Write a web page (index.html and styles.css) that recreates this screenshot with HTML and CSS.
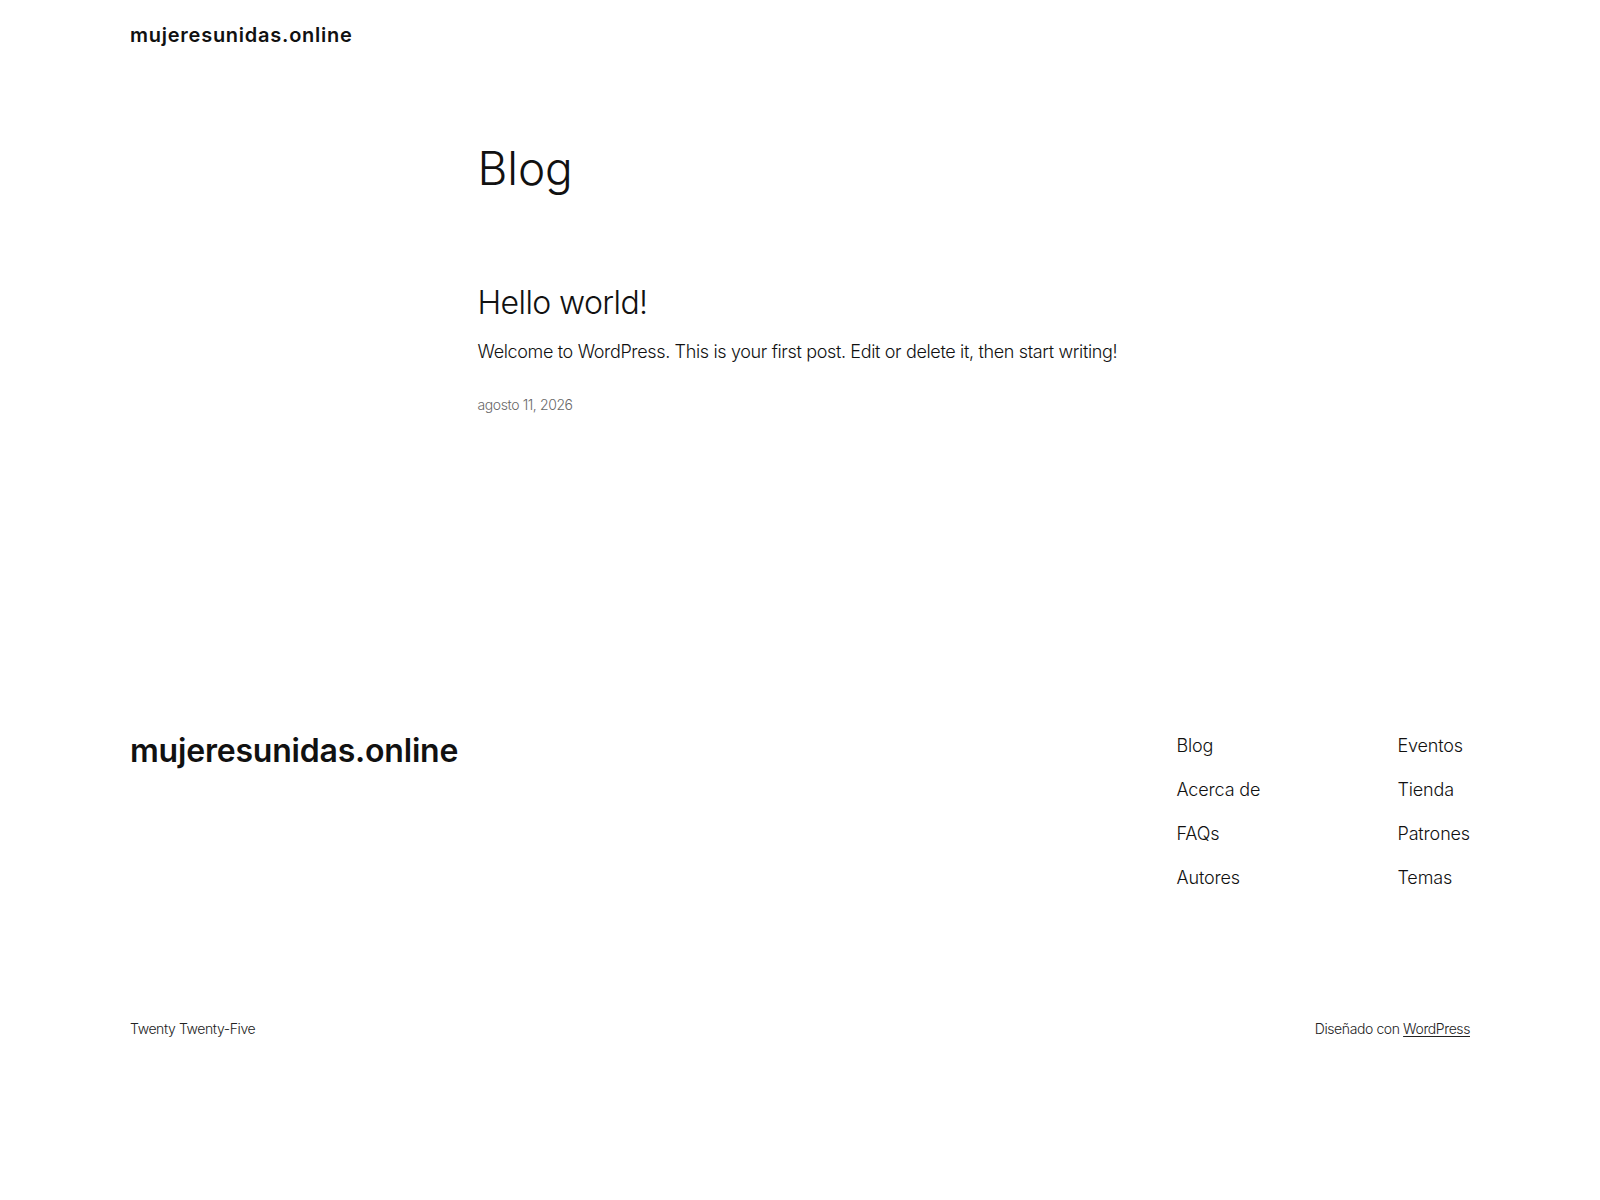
FILE: index.html
```html
<!DOCTYPE html>
<html lang="es">
<head>
<meta charset="utf-8">
<title>Blog – mujeresunidas.online</title>
<link rel="stylesheet" href="styles.css">
</head>
<body>
<header class="site-header">
  <div class="wide">
    <a class="site-title" href="#">mujeresunidas.online</a>
  </div>
</header>

<main class="site-main">
  <div class="content">
    <h1 class="page-title">Blog</h1>
    <article class="post">
      <h2 class="post-title"><a href="#">Hello world!</a></h2>
      <p class="post-excerpt">Welcome to WordPress. This is your first post. Edit or delete it, then start writing!</p>
      <div class="post-date">agosto 11, 2026</div>
    </article>
  </div>
</main>

<footer class="site-footer">
  <div class="wide">
    <div class="footer-top">
      <a class="footer-title" href="#">mujeresunidas.online</a>
      <nav class="footer-navs">
        <ul class="footer-nav first">
          <li><a href="#">Blog</a></li>
          <li><a href="#">Acerca de</a></li>
          <li><a href="#">FAQs</a></li>
          <li><a href="#">Autores</a></li>
        </ul>
        <ul class="footer-nav">
          <li><a href="#">Eventos</a></li>
          <li><a href="#">Tienda</a></li>
          <li><a href="#">Patrones</a></li>
          <li><a href="#">Temas</a></li>
        </ul>
      </nav>
    </div>
    <div class="footer-bottom">
      <span>Twenty Twenty-Five</span>
      <span>Diseñado con <a class="wp-link" href="#">WordPress</a></span>
    </div>
  </div>
</footer>
</body>
</html>
```

FILE: styles.css
```css
* { box-sizing: border-box; }

html, body {
  margin: 0;
  padding: 0;
  background: #ffffff;
}

body {
  font-family: Inter, "Noto Sans", "Liberation Sans", sans-serif;
  font-weight: 300;
  color: #111111;
  letter-spacing: -0.1px;
}

a {
  color: inherit;
  text-decoration: none;
}

.wide {
  width: 1340px;
  margin: 0 auto;
}

.content {
  width: 645px;
  margin: 0 auto;
}

/* Header */
.site-header {
  padding-top: 22px;
}

.site-title {
  display: block;
  font-size: 20px;
  line-height: 26px;
  font-weight: 600;
  letter-spacing: 0.75px;
}

/* Main */
.site-main {
  padding-top: 95px;
  min-height: 685px;
}

.page-title {
  margin: 0;
  font-size: 46px;
  line-height: 51px;
  font-weight: 300;
  letter-spacing: -0.1px;
}

.post {
  margin-top: 91px;
}

.post-title {
  margin: 0;
  font-size: 32px;
  line-height: 36px;
  font-weight: 300;
  letter-spacing: -0.6px;
}

.post-excerpt {
  margin: 18px 0 0;
  font-size: 18px;
  line-height: 25px;
  letter-spacing: -0.35px;
}

.post-date {
  margin-top: 31px;
  font-size: 14px;
  line-height: 20px;
  color: #686868;
  letter-spacing: -0.4px;
}

/* Footer */
.footer-top {
  display: flex;
  justify-content: space-between;
  align-items: flex-start;
}

.footer-title {
  font-size: 32px;
  line-height: 36px;
  font-weight: 600;
  letter-spacing: -0.2px;
  margin-top: 0;
}

.footer-navs {
  display: flex;
}

.footer-nav {
  list-style: none;
  margin: 0;
  padding: 0;
  display: flex;
  flex-direction: column;
  gap: 18px;
}

.footer-nav.first {
  width: 221px;
}

.footer-nav li {
  font-size: 18px;
  line-height: 26px;
  letter-spacing: -0.15px;
}

.footer-bottom {
  margin-top: 128px;
  display: flex;
  justify-content: space-between;
  font-size: 14px;
  line-height: 20px;
  letter-spacing: -0.4px;
  color: #222222;
}

.wp-link {
  text-decoration: underline;
  text-underline-offset: 2px;
}
```
